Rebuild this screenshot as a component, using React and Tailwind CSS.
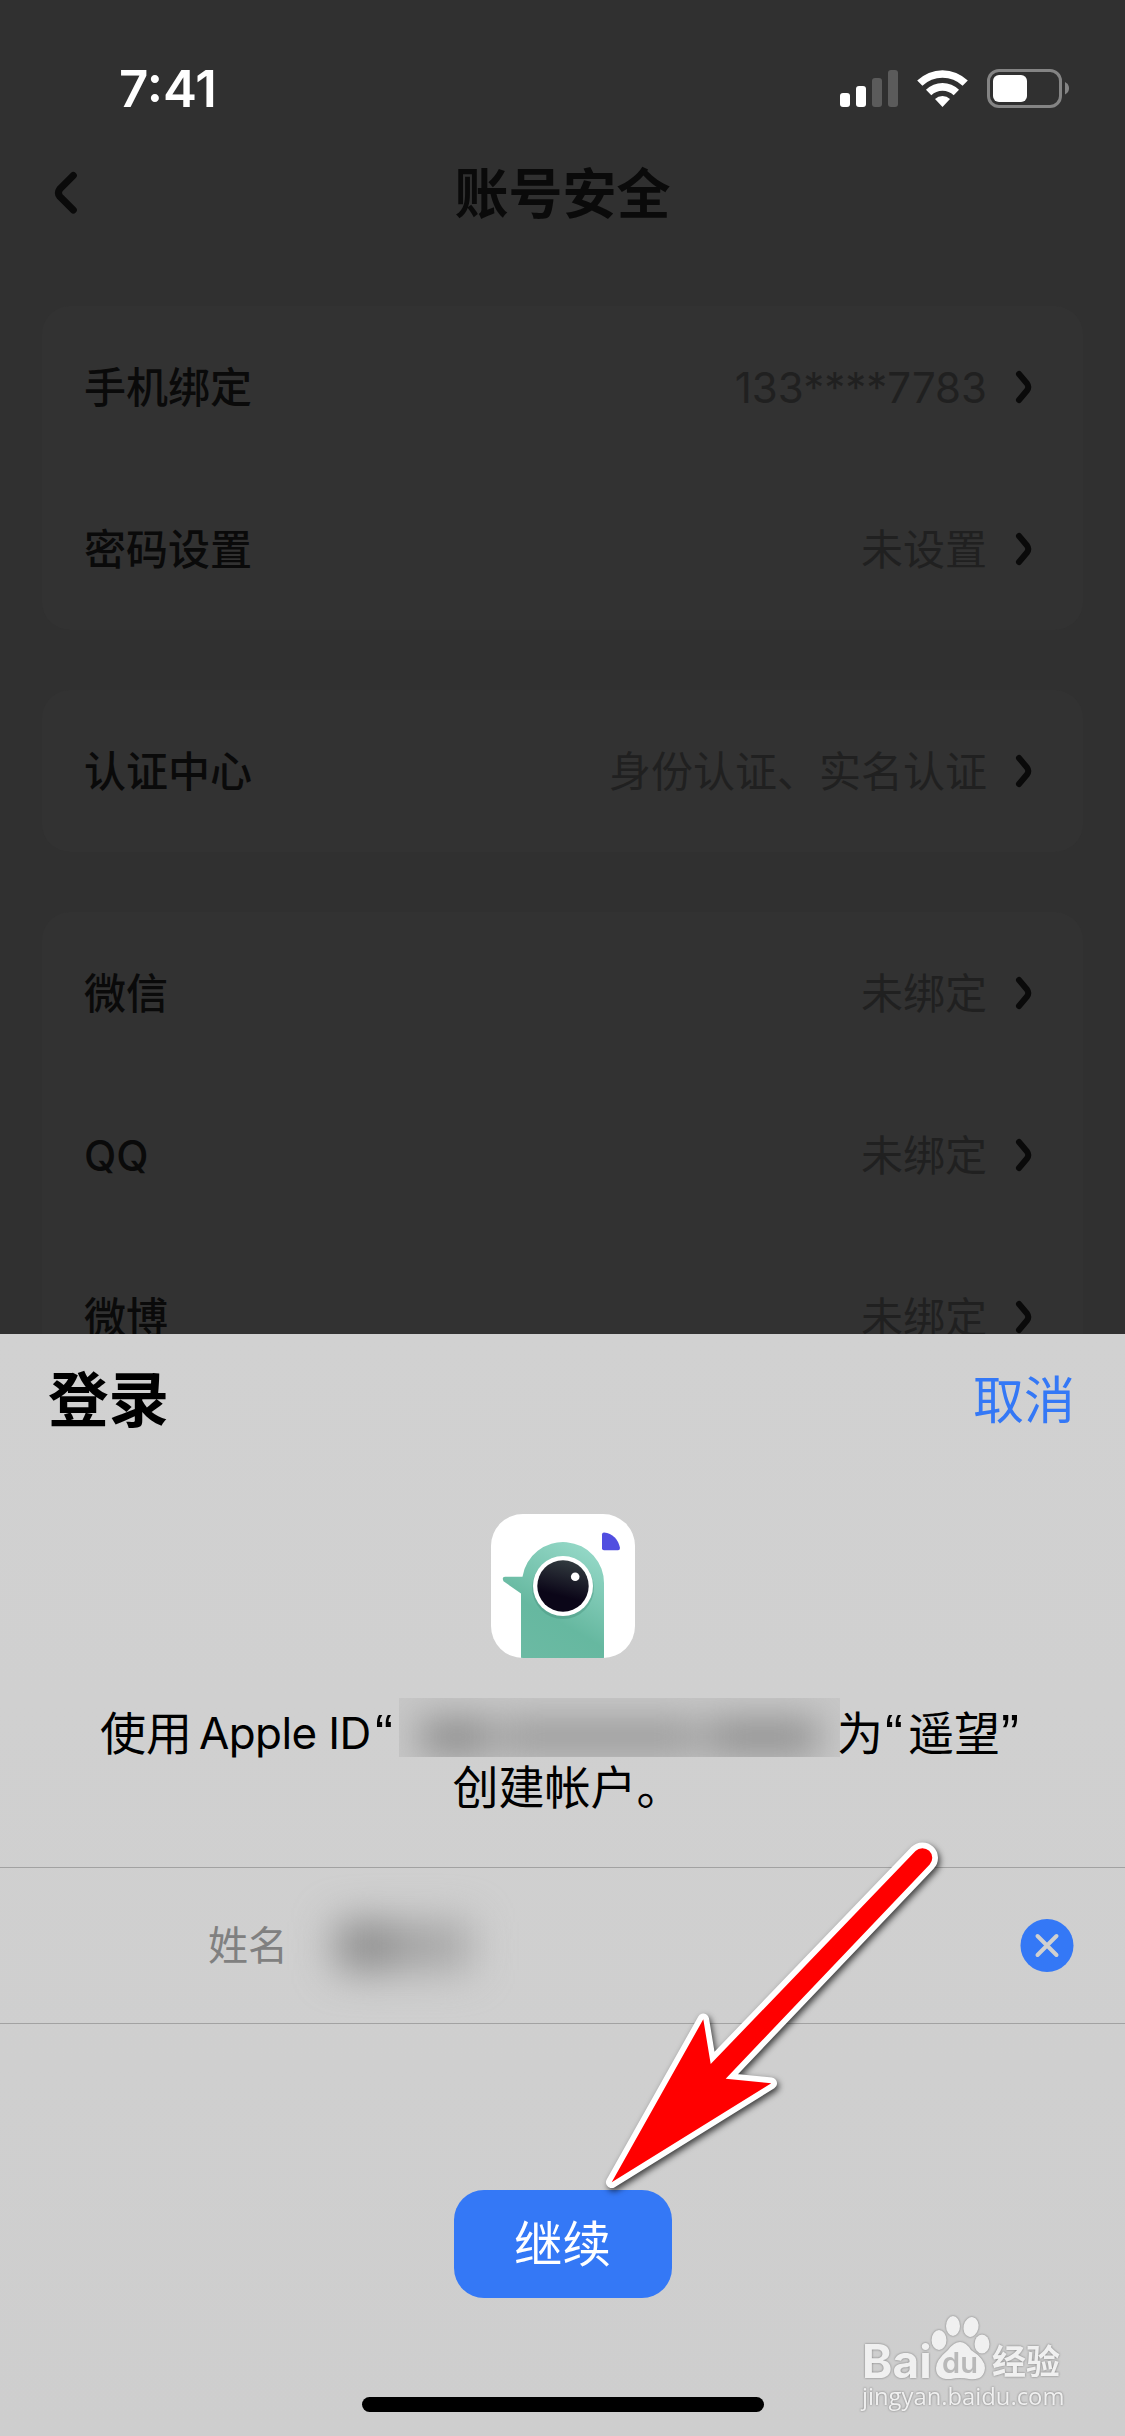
function StatusBar() {
  return (
    <div className="flex h-[132px] items-start justify-between pl-[119px] pr-[56px] pt-[62px]">
      <div className="text-[51px] font-semibold leading-[53px] text-white">7:41</div>
      <svg className="mt-[7px]" width="229" height="40" viewBox="840 69 229 40">
        <rect x="840" y="93" width="10" height="14" rx="3" fill="#fff" />
        <rect x="856" y="86" width="10" height="21" rx="3" fill="#fff" />
        <rect x="872" y="78" width="10" height="29" rx="3" fill="#5b5b5b" />
        <rect x="888" y="70" width="10" height="37" rx="3" fill="#5b5b5b" />
        <path d="M917.200 80.600 A36 36 0 0 1 967.800 80.600 L962.600 85.800 A29 29 0 0 0 922.400 85.800 Z" fill="#fff" />
        <path d="M926 89.800 A23.500 23.500 0 0 1 959 89.800 L953.700 95.200 A16 16 0 0 0 931.300 95.200 Z" fill="#fff" />
        <path d="M935 99 A11 11 0 0 1 950 99 L942.500 107 Z" fill="#fff" />
        <rect x="988.500" y="70.500" width="72" height="36" rx="10.500" fill="none" stroke="#848484" strokeWidth="3" />
        <rect x="993" y="75" width="34" height="27" rx="6" fill="#fff" />
        <path d="M1065 82 Q1069 84 1069 88.300 Q1069 92.500 1065 94.500 Z" fill="#848484" />
      </svg>
    </div>
  );
}

function Header() {
  return (
    <div className="grid h-[126px] grid-cols-[1fr_auto_1fr] items-center pl-[52px] pr-[52px]">
      <svg className="mb-[4px]" width="28" height="48" viewBox="0 0 28 48" fill="none" stroke="#0a0a0a" strokeWidth="7" strokeLinecap="round" strokeLinejoin="round">
        <path d="M21.300 6.500 L7.800 20 Q5 24 7.800 27.500 L21.300 41" />
      </svg>
      <h1 className="text-[54px] font-bold leading-[60px] text-[#0a0a0a]">账号安全</h1>
    </div>
  );
}

function Row({ label, value }) {
  return (
    <div className="flex h-[162px] items-center pl-[42px] pr-[50px] text-[42px] leading-[60px]">
      <span className="pt-[2px] font-medium text-[#0a0a0a]">{label}</span>
      <span className="ml-auto pt-[2px] text-[#202020]">{value}</span>
      <svg className="ml-[26px]" width="20" height="38" viewBox="0 0 20 38" fill="none" stroke="#0a0a0a" strokeWidth="6" strokeLinecap="round" strokeLinejoin="round">
        <path d="M6 6 L14 15.500 Q16.500 19 14 22.500 L6 32" />
      </svg>
    </div>
  );
}

function Card({ rows }) {
  return (
    <div className="rounded-[28px] bg-[#323232]">
      {rows.map(([label, value]) => (
        <Row key={label} label={label} value={value} />
      ))}
    </div>
  );
}

function AppIcon() {
  return (
    <svg width="144" height="144" viewBox="0 0 144 144">
      <defs>
        <clipPath id="tile"><rect width="144" height="144" rx="32" /></clipPath>
        <linearGradient id="bird" x1="0.8" y1="0" x2="0.3" y2="1">
          <stop offset="0" stopColor="#96d9c8" />
          <stop offset="0.65" stopColor="#66b8a0" />
          <stop offset="1" stopColor="#6bbaa3" />
        </linearGradient>
        <linearGradient id="lens" x1="0.65" y1="0" x2="0.4" y2="1">
          <stop offset="0" stopColor="#333c40" />
          <stop offset="0.7" stopColor="#0b0618" />
        </linearGradient>
      </defs>
      <g clipPath="url(#tile)">
        <rect width="144" height="144" fill="#fff" />
        <path d="M30 144 V79.500 L12.500 67.300 Q10.500 62.700 14 62.700 H31.500 A41 41 0 0 1 113 70 V144 Z" fill="url(#bird)" />
        <circle cx="72" cy="74" r="31" fill="#3f8a76" opacity="0.35" />
        <circle cx="72" cy="72" r="30" fill="#fff" />
        <circle cx="72" cy="72" r="25.700" fill="url(#lens)" />
        <circle cx="84.200" cy="62.700" r="4.300" fill="#fff" />
        <path d="M111 20.500 Q111 18.500 113 18.500 Q126 20 129 34 Q129 36.300 127 36.300 H113 Q111 36.300 111 34.300 Z" fill="#514ee0" />
      </g>
    </svg>
  );
}

function Arrow() {
  const d = "M31.700 362.300 L123.300 199.300 L130.700 244 L335.500 31 A9.800 9.800 0 0 1 349.700 44.500 L145.700 258.700 L191.300 263.300 Z";
  return (
    <svg className="absolute left-[580px] top-[1820px] drop-shadow-[2px_3px_3px_rgba(0,0,0,0.7)]" width="400" height="400" viewBox="0 0 400 400">
      <path d={d} fill="#fff" stroke="#fff" strokeWidth="11.500" strokeLinejoin="round" />
      <path d={d} fill="#f00" />
    </svg>
  );
}

function Watermark() {
  return (
    <div className="absolute left-[862px] top-[2312px] w-[204px] text-[#f0f0f0] drop-shadow-[0_0_1px_rgba(100,100,100,0.8)]">
      <div className="flex h-[70px] items-end">
        <span className="w-[69px] text-[46px] font-bold leading-[42px] font-[Inter]">Bai</span>
        <svg width="60" height="68" viewBox="0 0 60 66">
          <g fill="#f0f0f0">
            <ellipse cx="8" cy="25" rx="7.500" ry="10" />
            <ellipse cx="22" cy="11" rx="7" ry="10" />
            <ellipse cx="40" cy="12" rx="7.500" ry="10" transform="rotate(12 40 12)" />
            <ellipse cx="51" cy="29" rx="7.500" ry="9.500" />
            <path d="M29 27 Q35 27 40 35 Q54 44 54 53 Q53 66 38 64 Q29 62 20 64 Q5 65 5 53 Q5 45 17 35 Q23 27 29 27 Z" />
          </g>
          <text x="29" y="58" textAnchor="middle" fontSize="29" fontWeight="600" fontFamily="Inter" fill="#b9b9b9">du</text>
        </svg>
        <span className="ml-[1px] text-[34px] font-bold leading-[40px]">经验</span>
      </div>
      <div className="text-[23.8px] leading-[28px] font-[Open_Sans]">jingyan.baidu.com</div>
    </div>
  );
}

export default function App() {
  return (
    <div className="relative h-[2436px] w-[1125px] overflow-hidden bg-[#303030] font-['Inter','Noto_Sans_CJK_SC',sans-serif]">
      <div className="h-[1334px] overflow-hidden">
        <StatusBar />
        <Header />
        <div className="mt-[48px] flex flex-col gap-[60px] px-[42px]">
          <Card rows={[["手机绑定", "133****7783"], ["密码设置", "未设置"]]} />
          <Card rows={[["认证中心", "身份认证、实名认证"]]} />
          <Card rows={[["微信", "未绑定"], ["QQ", "未绑定"], ["微博", "未绑定"]]} />
        </div>
      </div>
      <div className="flex h-[1102px] flex-col items-center bg-linear-to-b from-[#d1d1d1] to-[#cecece]">
        <div className="flex h-[180px] w-full items-start justify-between pl-[48px] pr-[50px] pt-[31px]">
          <h2 className="text-[60.5px] font-bold leading-[70px] text-black">登录</h2>
          <button className="mt-[1px] text-[51px] leading-[70px] text-[#3478f6]">取消</button>
        </div>
        <AppIcon />
        <div className="mt-[48px] flex h-[54px] w-full items-center pl-[100px] text-[46px] leading-[54px] text-black">
          <span className="w-[99px] whitespace-nowrap">使用</span>
          <span className="w-[176px] whitespace-nowrap text-[44px] tracking-[-0.6px]">Apple ID</span>
          <span className="w-[24px] text-[54px] font-['Liberation_Sans']">“</span>
          <span className="mt-[-11px] h-[59px] w-[441px] overflow-hidden bg-[#c7c7c7]">
            <span className="mt-[22px] flex h-[34px] gap-[10px] px-[22px] blur-[18px]">
              <span className="w-[70px] bg-[#888888]" />
              <span className="grow bg-[#989898]" />
              <span className="w-[110px] bg-[#8c8c8c]" />
            </span>
          </span>
          <span className="ml-[-3px] w-[48px] whitespace-nowrap">为</span>
          <span className="w-[23px] text-[54px] font-['Liberation_Sans']">“</span>
          <span className="whitespace-nowrap">遥望</span>
          <span className="ml-[1px] text-[54px] font-['Liberation_Sans']">”</span>
        </div>
        <div className="h-[54px] pl-[10px] text-[46px] leading-[54px] text-black">创建帐户。</div>
        <div className="mt-[53px] flex h-[157px] w-full items-center border-y border-[#a2a2a2] pl-[208px] pr-[51px]">
          <span className="text-[40px] leading-[48px] text-[#808080]">姓名</span>
          <span className="ml-[48px] flex h-[48px] w-[134px] blur-[20px]">
            <span className="w-[60px] bg-[#8a8a8a]" />
            <span className="grow bg-[#a4a4a4]" />
          </span>
          <svg className="ml-auto" width="54" height="54" viewBox="0 0 54 54">
            <circle cx="27" cy="26.500" r="26.500" fill="#3478f6" />
            <path d="M17.500 17 L36.500 36 M36.500 17 L17.500 36" stroke="#d0d0d0" strokeWidth="4" strokeLinecap="round" />
          </svg>
        </div>
        <button className="mt-[166px] h-[108px] w-[218px] rounded-[30px] bg-[#3478f6] pt-[1px] text-[48.5px] leading-[60px] text-white">继续</button>
        <div className="mt-[99px] h-[15px] w-[402px] rounded-full bg-black" />
      </div>
      <Arrow />
      <Watermark />
    </div>
  );
}
